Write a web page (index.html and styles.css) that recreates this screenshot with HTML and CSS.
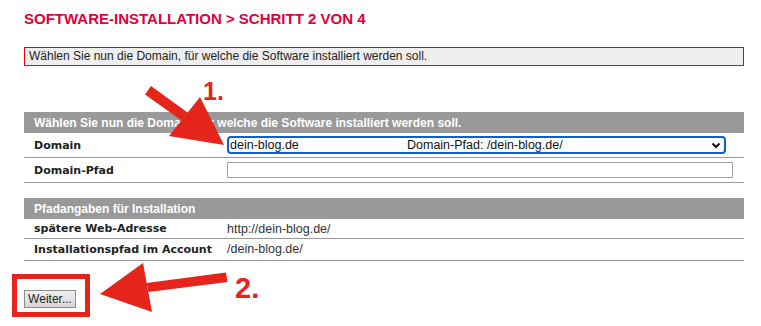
FILE: index.html
```html
<!DOCTYPE html>
<html lang="de">
    <head>
        <meta charset="utf-8" />
        <meta name="viewport" content="width=device-width, initial-scale=1" />

        <title>Software-Installation</title>

        <link rel="stylesheet" href="styles.css">
    </head>

    <body>
        <div class="page">
            <h1 class="title">SOFTWARE-INSTALLATION &gt; SCHRITT 2 VON 4</h1>

            <div class="notice">
                Wählen Sie nun die Domain, für welche die Software installiert werden soll.
            </div>

            <table class="form-table domain-table">
                <colgroup>
                    <col class="label-col" />
                    <col />
                </colgroup>
                <tr class="heading">
                    <td colspan="2">Wählen Sie nun die Domain, für welche die Software installiert werden soll.</td>
                </tr>
                <tr class="item">
                    <td class="label">Domain</td>
                    <td>
                        <div class="select-box">
                            <span class="select-domain">dein-blog.de</span>
                            <span class="select-path">Domain-Pfad: /dein-blog.de/</span>
                            <svg class="chevron" width="10" height="7" viewBox="0 0 10 7">
                                <polyline points="1.5,1.5 5,5 8.5,1.5" fill="none" stroke="#111" stroke-width="2" />
                            </svg>
                        </div>
                    </td>
                </tr>
                <tr class="item">
                    <td class="label">Domain-Pfad</td>
                    <td><input class="text-input" type="text" /></td>
                </tr>
            </table>

            <table class="form-table path-table">
                <colgroup>
                    <col class="label-col" />
                    <col />
                </colgroup>
                <tr class="heading">
                    <td colspan="2">Pfadangaben für Installation</td>
                </tr>
                <tr class="item">
                    <td class="label">spätere Web-Adresse</td>
                    <td class="value">http://dein-blog.de/</td>
                </tr>
                <tr class="item">
                    <td class="label">Installationspfad im Account</td>
                    <td class="value value-up">/dein-blog.de/</td>
                </tr>
            </table>

            <div class="actions">
                <button class="btn" type="button">Weiter...</button>
            </div>
        </div>

        <!-- screenshot annotations -->
        <svg class="annotations" width="761" height="326" viewBox="0 0 761 326">
            <g fill="#e5241b">
                <polygon points="145,94.5 151,86 187.5,112.5 181.5,120.5" />
                <polygon points="200,97 224,145 169,136" />
                <polygon points="226,272.5 227.5,282 148.5,292 146.5,283" />
                <polygon points="143,263 100,294 152,312" />
                <text x="203" y="100" class="step-num" font-size="25">1.</text>
                <text x="235" y="298" class="step-num" font-size="29">2.</text>
            </g>
            <rect x="14.5" y="276.5" width="73" height="38" fill="none" stroke="#e5241b" stroke-width="5" />
        </svg>
    </body>
</html>
```

FILE: styles.css
```css
body {
    margin: 0;
    font-family: "Liberation Sans", Arial, sans-serif;
    font-size: 12px;
    color: #222;
    background: #fff;
}

.page {
    width: 720px;
    padding: 10px 0 0 24px;
}

.title {
    margin: 0 0 19px 0;
    font-size: 15px;
    line-height: 18px;
    font-weight: bold;
    color: #e2003c;
}

.notice {
    height: 17px;
    line-height: 17px;
    padding-left: 4px;
    border: 1px solid #e3061a;
    background: #eeeeee;
    color: #222;
    margin-bottom: 46px;
}

.form-table {
    width: 720px;
    table-layout: fixed;
    border-collapse: separate;
    border-spacing: 0;
}

.form-table .label-col {
    width: 203px;
}

.form-table td {
    padding: 0;
    vertical-align: middle;
}

.form-table tr.heading td {
    height: 21px;
    padding-left: 10px;
    background: #999;
    color: #fff;
    font-weight: bold;
    font-size: 12px;
}

.form-table tr.item td {
    border-bottom: 1px solid #999;
}

.domain-table tr.item td {
    height: 24px;
}

.path-table tr.item td {
    height: 19px;
}

.form-table td.label {
    padding-left: 10px;
    font-family: "DejaVu Sans", Verdana, sans-serif;
    font-size: 11px;
    font-weight: bold;
    color: #222;
    white-space: nowrap;
}

.form-table td.value {
    font-size: 12.5px;
    color: #333;
}

.form-table td.value-up {
    padding-bottom: 2px;
}

.path-table {
    margin-top: 15px;
}

.select-box {
    display: flex;
    align-items: center;
    width: 499px;
    height: 18px;
    box-sizing: border-box;
    border: 2px solid #0b61cc;
    border-radius: 4px;
    padding-left: 1px;
    font-size: 12.5px;
    color: #111;
}

.select-domain {
    width: 177px;
}

.select-path {
    flex: 1;
}

.chevron {
    margin-right: 3px;
}

.text-input {
    display: block;
    width: 506px;
    height: 16px;
    box-sizing: border-box;
    margin: 0;
    border: 1px solid #a3a3a3;
    padding: 0 2px;
    background: #fff;
}

.actions {
    padding-top: 29px;
}

.btn {
    display: block;
    width: 52px;
    height: 18px;
    margin: 0;
    padding: 0;
    border: 1px solid #8e8e8e;
    background: linear-gradient(#f0f0f0, #d6d6d6);
    font-family: "Liberation Sans", Arial, sans-serif;
    font-size: 12px;
    color: #222;
}

.annotations {
    position: absolute;
    top: 0;
    left: 0;
    pointer-events: none;
}

.step-num {
    font-family: "Liberation Sans", Arial, sans-serif;
    font-weight: bold;
}
```
